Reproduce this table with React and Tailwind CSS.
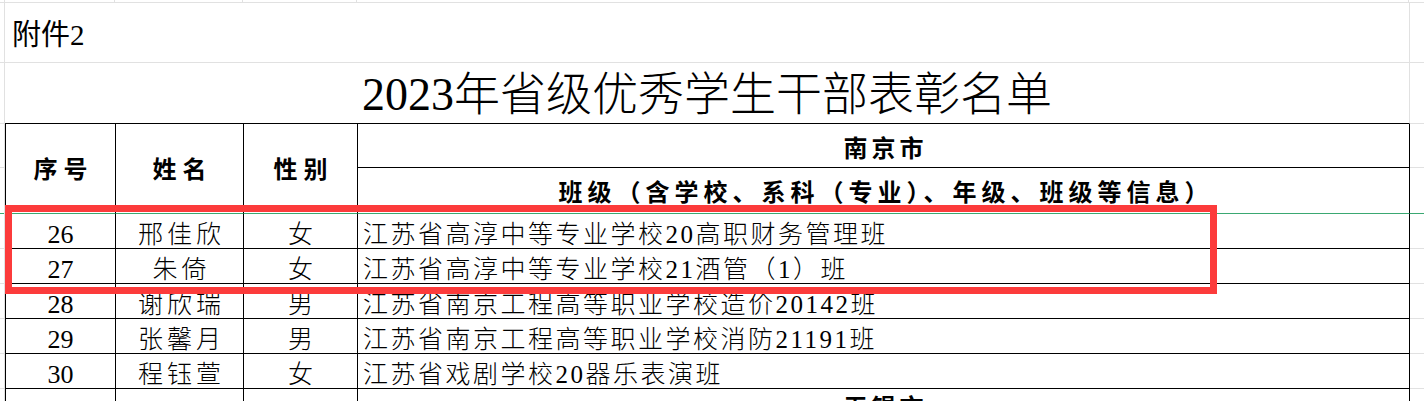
import React from "react";

const rows = [
  { n: "26", name: "邢佳欣", sex: "女", info: "江苏省高淳中等专业学校20高职财务管理班" },
  { n: "27", name: "朱倚", sex: "女", info: "江苏省高淳中等专业学校21酒管（1）班" },
  { n: "28", name: "谢欣瑞", sex: "男", info: "江苏省南京工程高等职业学校造价20142班" },
  { n: "29", name: "张馨月", sex: "男", info: "江苏省南京工程高等职业学校消防21191班" },
  { n: "30", name: "程钰萱", sex: "女", info: "江苏省戏剧学校20器乐表演班" },
];

// digits are set in the serif at normal weight; CJK stays light
function Mixed({ text }) {
  const parts = text.split(/(\d+)/);
  return parts.map((p, i) =>
    /^\d+$/.test(p) ? (
      <span key={i} className="font-normal">
        {p}
      </span>
    ) : (
      <span key={i}>{p}</span>
    )
  );
}

function DataRow({ n, name, sex, info }) {
  return (
    <div className="flex h-[35px] shrink-0">
      <div className="w-[5px] shrink-0 border-r border-b border-[#e1e1e1]" />
      <div className="w-[110px] shrink-0 border-l border-b border-black flex items-center justify-center pt-[7px] text-[26px] leading-none">
        {n}
      </div>
      <div className="w-[128px] shrink-0 border-l border-b border-black flex items-center justify-center pt-[7px] pl-[4px] text-[25px] leading-none tracking-[4px] font-light">
        {name}
      </div>
      <div className="w-[114px] shrink-0 border-l border-b border-black flex items-center justify-center pt-[7px] text-[25px] leading-none font-light">
        {sex}
      </div>
      <div className="w-[1053px] shrink-0 border-l border-r border-b border-black flex items-center pl-[5px] pt-[7px] text-[25px] leading-none tracking-[2.5px] font-light whitespace-nowrap">
        <span>
          <Mixed text={info} />
        </span>
      </div>
      <div className="flex-1 border-b border-[#e1e1e1]" />
    </div>
  );
}

export default function App() {
  return (
    <div className="relative w-[1424px] h-[401px] overflow-hidden bg-white text-black [font-family:'Liberation_Serif','Noto_Sans_CJK_SC',serif]">
      {/* top sliver of previous row */}
      <div className="flex h-[3px]">
        <div className="w-[5px] shrink-0 border-r border-b border-[#e1e1e1]" />
        <div className="w-[110px] shrink-0 border-r border-b border-[#e1e1e1]" />
        <div className="w-[128px] shrink-0 border-r border-b border-[#e1e1e1]" />
        <div className="w-[114px] shrink-0 border-r border-b border-[#e1e1e1]" />
        <div className="w-[1052px] shrink-0 border-r border-b border-[#e1e1e1]" />
        <div className="flex-1 border-b border-[#e1e1e1]" />
      </div>

      {/* 附件2 */}
      <div className="flex h-[60px]">
        <div className="w-[5px] shrink-0 border-r border-b border-[#e1e1e1]" />
        <div className="w-[1405px] shrink-0 border-r border-b border-[#e1e1e1] flex items-center pl-[7px] pt-[6px] text-[29px] leading-none">
          附件2
        </div>
        <div className="flex-1 border-b border-[#e1e1e1]" />
      </div>

      {/* title */}
      <div className="flex h-[61px]">
        <div className="w-[5px] shrink-0 border-r border-b border-[#e1e1e1]" />
        <div className="w-[1405px] shrink-0 border-r border-r-[#e1e1e1] border-b border-b-black flex items-center justify-center pt-[4px] text-[46px] leading-none font-light whitespace-nowrap">
          <span>
            <Mixed text="2023年省级优秀学生干部表彰名单" />
          </span>
        </div>
        <div className="flex-1 border-b border-[#e1e1e1]" />
      </div>

      {/* header block */}
      <div className="flex h-[90px]">
        <div className="w-[5px] shrink-0 border-r border-[#e1e1e1] flex flex-col">
          <div className="h-[44px] border-b border-[#e1e1e1]" />
          <div className="flex-1 border-b border-[#3aa872]" />
        </div>
        <div className="w-[110px] shrink-0 border-l border-black border-b border-b-[#3aa872] flex items-center justify-center pt-[2px] pl-[6px] text-[24px] leading-none font-bold tracking-[6px]">
          序号
        </div>
        <div className="w-[128px] shrink-0 border-l border-black border-b border-b-[#3aa872] flex items-center justify-center pt-[2px] pl-[6px] text-[24px] leading-none font-bold tracking-[6px]">
          姓名
        </div>
        <div className="w-[114px] shrink-0 border-l border-black border-b border-b-[#3aa872] flex items-center justify-center pt-[2px] pl-[6px] text-[24px] leading-none font-bold tracking-[6px]">
          性别
        </div>
        <div className="w-[1053px] shrink-0 border-l border-r border-black border-b border-b-[#3aa872] flex flex-col">
          <div className="h-[44px] shrink-0 border-b border-black flex items-center justify-center pt-[6px] pl-[4px] text-[24px] leading-none font-bold tracking-[4px]">
            南京市
          </div>
          <div className="flex-1 flex items-center justify-center pt-[4px] pl-[5px] text-[24px] leading-none font-bold tracking-[5px] whitespace-nowrap">
            班级（含学校、系科（专业）、年级、班级等信息）
          </div>
        </div>
        <div className="flex-1 flex flex-col">
          <div className="h-[44px] border-b border-[#e1e1e1]" />
          <div className="flex-1 border-b border-[#3aa872]" />
        </div>
      </div>

      {rows.map((r) => (
        <DataRow key={r.n} {...r} />
      ))}

      {/* next city header (cut off by the window edge) */}
      <div className="flex h-[45px]">
        <div className="w-[5px] shrink-0 border-r border-[#e1e1e1]" />
        <div className="w-[110px] shrink-0 border-l border-black" />
        <div className="w-[128px] shrink-0 border-l border-black" />
        <div className="w-[114px] shrink-0 border-l border-black" />
        <div className="w-[1053px] shrink-0 border-l border-r border-black flex justify-center pt-[7px] pl-[4px] text-[24px] leading-none font-bold tracking-[4px]">
          无锡市
        </div>
        <div className="flex-1" />
      </div>

      {/* red highlight annotation */}
      <div className="absolute left-[5px] top-[205px] w-[1212px] h-[89px] border-[7px] border-[#fc3b3b]" />
    </div>
  );
}
